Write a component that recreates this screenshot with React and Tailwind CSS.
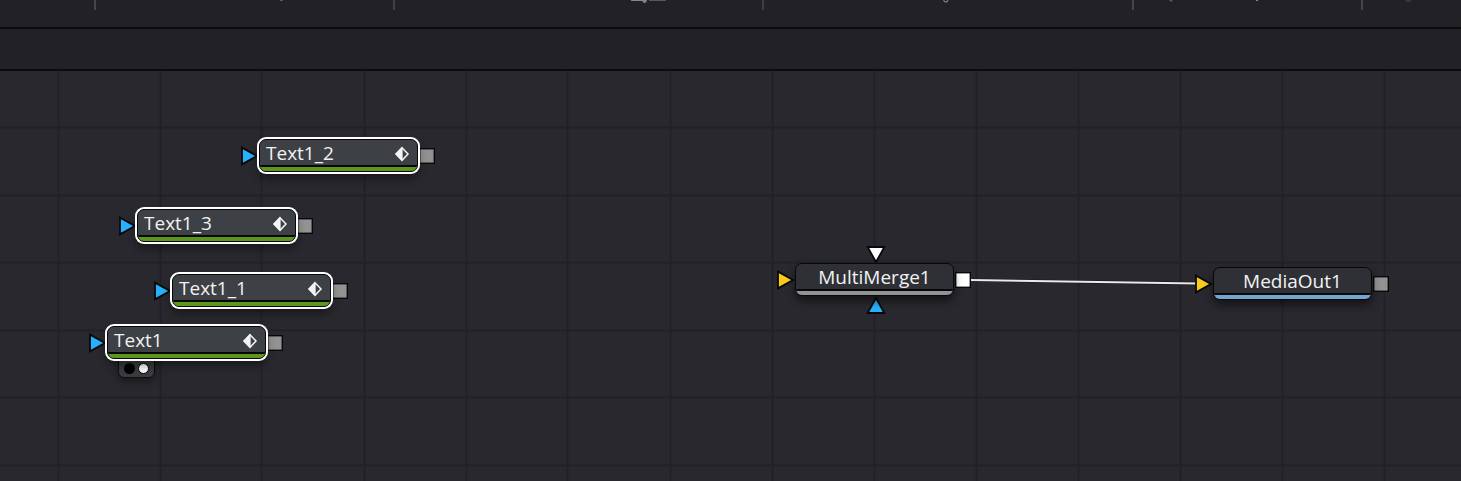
const GRID_X = [58, 160, 261, 364, 466, 567, 670, 772, 874, 976, 1078, 1180, 1282, 1384, 1486, 1588, 1690, 1792, 1894];
const GRID_Y = [56, 124, 191, 259, 326, 394, 461, 529, 596, 664, 731, 799, 866, 934, 1001];

const NODES = [
  { name: "Text1_2", x: 259, y: 68, selected: true },
  { name: "Text1_3", x: 137, y: 138, selected: true },
  { name: "Text1_1", x: 172, y: 203, selected: true },
  { name: "Text1", x: 107, y: 255, selected: true, viewed: true },
  { name: "MultiMerge1", x: 795, y: 192, stripe: "bg-[#929292]", input: "#fbcb1c", output: "#ffffff", merge: true },
  { name: "MediaOut1", x: 1213, y: 196, stripe: "bg-[#73a5d3]", input: "#fbcb1c", output: "#929292" },
];

function Triangle({ fill, className }) {
  return (
    <svg className={className} width="20" height="20" viewBox="0 0 20 20" aria-hidden="true">
      <path d="M2 1.6 L17 10 L2 18.4 Z" fill={fill} stroke="#08080a" strokeWidth="1.8" />
    </svg>
  );
}

function KeyframeMark() {
  return (
    <svg width="16" height="16" viewBox="0 0 16 16" aria-hidden="true">
      <path d="M8 1.7 L14 8 L8 14.3 L2 8 Z" fill="none" stroke="#f4f4f4" strokeWidth="1.5" />
      <path d="M8.6 1 V15 L1.2 8 Z" fill="#f4f4f4" />
    </svg>
  );
}

function Node({ node }) {
  const { name, x, y, selected, viewed, merge } = node;
  return (
    <div className="absolute" style={{ left: x, top: y }}>
      <Triangle fill={node.input ?? "#28b0fb"} className="absolute -left-[19px] top-[7px]" />
      {merge && <Triangle fill="#ffffff" className="absolute left-[71px] -top-[18px] rotate-90" />}
      {merge && <Triangle fill="#28b0fb" className="absolute left-[71px] top-[32px] -rotate-90" />}
      <svg className="absolute left-[160px] top-[9px]" width="16" height="16" viewBox="0 0 16 16" aria-hidden="true">
        <rect x="0.7" y="0.7" width="14.6" height="14.6" fill={node.output ?? "#929292"} stroke="#08080a" strokeWidth="1.4" />
      </svg>
      {viewed && (
        <div className="absolute left-[11px] top-[26px] flex h-[26px] w-[37px] items-end justify-center gap-[3px] rounded-md border border-[#0c0c0e] bg-[#3a3c41] pb-[3px] shadow-[0_4px_7px_rgba(0,0,0,0.35)]">
          <span className="size-[11px] rounded-full bg-black" />
          <span className="size-[11px] rounded-full border border-black bg-white" />
        </div>
      )}
      <button
        type="button"
        className={
          selected
            ? "relative flex h-[33px] w-[159px] flex-col overflow-hidden rounded-[7px] border border-[#08080a] bg-[#3d4045] text-left shadow-[0_0_0_2px_#fff,0_6px_10px_rgba(0,0,0,0.45)]"
            : "relative flex h-[33px] w-[159px] flex-col overflow-hidden rounded-[7px] border border-[#08080a] bg-[#2f3036] text-center shadow-[0_5px_9px_rgba(0,0,0,0.5)]"
        }
      >
        <span
          className={
            selected
              ? "flex h-[25px] w-full items-center justify-between pt-[2px] pl-[6px] pr-[7px]"
              : "flex h-[25px] w-full items-center justify-center pt-[2px]"
          }
        >
          <span className="text-[19px] leading-[25px]">{name}</span>
          {selected && <KeyframeMark />}
        </span>
        <span className={`h-[6px] w-full border-t-2 border-[#08080a] ${node.stripe ?? "bg-[#5d961d]"}`} />
      </button>
    </div>
  );
}

function Toolbar() {
  return (
    <div className="flex h-[27px] shrink-0 items-start overflow-hidden bg-[#222126]">
      <div className="h-[10px] w-[96px] shrink-0 border-r-2 border-[#43474c]" />
      <div className="h-[10px] w-[299px] shrink-0 border-r-2 border-[#414145] pl-[184px]">
        <svg width="5" height="3" viewBox="0 0 5 3" aria-hidden="true">
          <path d="M0 0 H3 V1 H0 Z" fill="#5a5a5d" />
        </svg>
      </div>
      <div className="h-[10px] w-[369px] shrink-0 border-r-2 border-[#3e3f44] pl-[236px]">
        <svg width="37" height="4" viewBox="0 0 37 4" aria-hidden="true">
          <path d="M0 0 H15 V1 H0 Z M11 0 H16 L15.4 2 L13.5 3.2 L11.8 2 Z" fill="#858587" />
          <path d="M18 0 H35 V1 H18 Z" fill="#58585b" />
        </svg>
      </div>
      <div className="h-[10px] w-[370px] shrink-0 border-r-2 border-[#43474c] pl-[179px]">
        <svg width="6" height="4" viewBox="0 0 6 4" aria-hidden="true">
          <path d="M0.8 0 C0.8 2.6 4.8 2.6 4.8 0" fill="none" stroke="#7c7c7f" strokeWidth="1.2" />
        </svg>
      </div>
      <div className="h-[10px] w-[229px] shrink-0 border-r-2 border-[#43474c] pl-[35px]">
        <svg width="90" height="3" viewBox="0 0 90 3" aria-hidden="true">
          <path d="M0 0 H4 L2 2 Z" fill="#59595c" />
          <path d="M87 0 H89 V1 H87 Z" fill="#8a8a8c" />
        </svg>
      </div>
      <div className="h-[10px] pl-[42px]">
        <svg width="8" height="4" viewBox="0 0 8 4" aria-hidden="true">
          <path d="M0 0 H7 L5 2 H2 Z" fill="#39393d" />
        </svg>
      </div>
    </div>
  );
}

export default function App() {
  return (
    <div className="flex h-screen flex-col overflow-hidden bg-[#222126] font-['Open_Sans','Noto_Sans',sans-serif] text-[#f2f2f2]">
      <Toolbar />
      <div className="h-[44px] shrink-0 border-y-2 border-[#0c0c0e] bg-[#222126]" />
      <main className="relative min-h-0 flex-1 overflow-hidden bg-[#29282e]">
        <svg className="absolute inset-0 size-full" aria-hidden="true">
          {GRID_X.map((x) => (
            <line key={x} x1={x + 0.5} x2={x + 0.5} y1="0" y2="100%" stroke="#222127" strokeWidth="2" />
          ))}
          {GRID_Y.map((y) => (
            <line key={y} x1="0" x2="100%" y1={y + 0.5} y2={y + 0.5} stroke="#222127" strokeWidth="2" />
          ))}
          <line x1="970" y1="209" x2="1197" y2="212.6" stroke="#17171a" strokeWidth="3.2" />
          <line x1="970" y1="209" x2="1197" y2="212.6" stroke="#ebebeb" strokeWidth="2" />
        </svg>
        {NODES.map((node) => (
          <Node key={node.name} node={node} />
        ))}
      </main>
    </div>
  );
}
